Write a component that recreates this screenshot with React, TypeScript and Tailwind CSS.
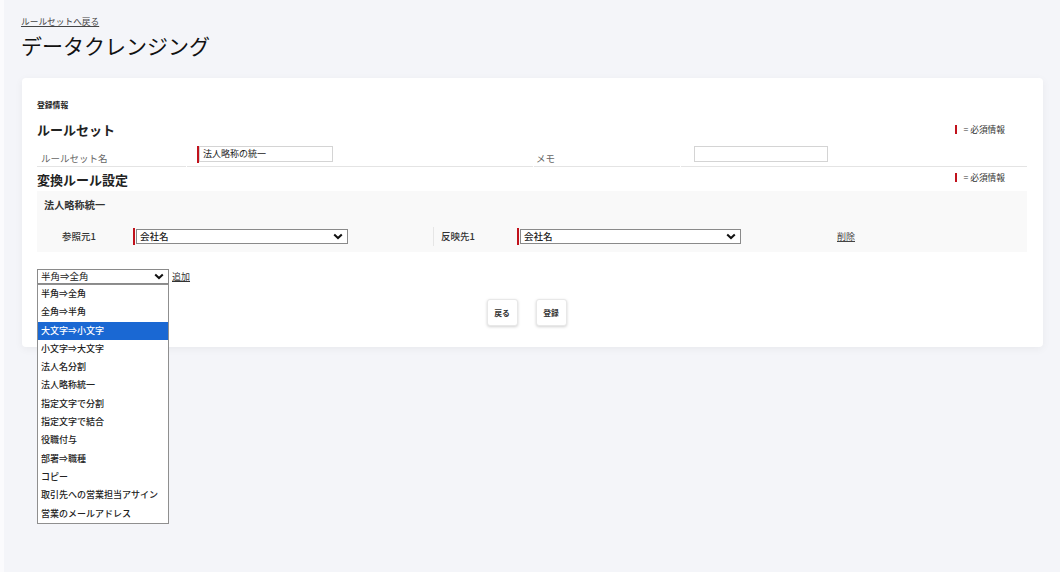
import React from 'react';

const options = [
  '半角⇒全角',
  '全角⇒半角',
  '大文字⇒小文字',
  '小文字⇒大文字',
  '法人名分割',
  '法人略称統一',
  '指定文字で分割',
  '指定文字で結合',
  '役職付与',
  '部署⇒職種',
  'コピー',
  '取引先への営業担当アサイン',
  '営業のメールアドレス',
];

function Chevron() {
  return (
    <svg width="10" height="7" viewBox="0 0 10 7" className="shrink-0">
      <path d="M1.2 1.4 L5 5 L8.8 1.4" fill="none" stroke="#111" strokeWidth="2" />
    </svg>
  );
}

function RequiredBar() {
  return <span className="block h-[17px] w-[2px] shrink-0 bg-[#c1121c]" />;
}

function FakeSelect({ value, width }: { value: string; width: string }) {
  return (
    <div
      className={`flex h-[15px] items-center justify-between border border-[#8a8a8a] bg-white pl-[3px] pr-[4px] text-[9.5px] text-[#222] ${width}`}
    >
      <span className="leading-none">{value}</span>
      <Chevron />
    </div>
  );
}

function Legend() {
  return (
    <div className="mr-[15px] flex items-center gap-[6px] bg-white px-[7px] text-[8.7px] text-[#333]">
      <span className="block h-[9px] w-[2px] bg-[#c1121c]" />
      <span>= 必須情報</span>
    </div>
  );
}

function App() {
  return (
    <div
      className="flex min-h-[572px] bg-[#f4f5f9] text-[#222]"
      style={{ fontFamily: '"Noto Sans CJK JP", "Noto Sans", sans-serif' }}
    >
      <div className="w-[4px] shrink-0 bg-[#fbfbfd]" />
      <div className="flex-1 pl-[17px] pt-[15px]">
        <a className="block text-[8.7px] leading-[14px] text-[#444] underline">ルールセットへ戻る</a>
        <h1 className="mt-[1px] text-[21px] leading-[30px] text-[#111]">データクレンジング</h1>

        <div className="mt-[18px] ml-[1px] w-[1021px] rounded-[4px] bg-white pl-[15px] pr-[16px] pt-[21px] pb-[21px] shadow-[0_2px_8px_rgba(0,0,0,0.05)]">
          <p className="text-[7.8px] font-bold leading-[12px] text-[#222]">登録情報</p>

          <div className="mt-[10px] flex items-center justify-between">
            <h2 className="text-[13px] font-bold leading-[18px] text-[#222]">ルールセット</h2>
            <Legend />
          </div>

          <div className="mt-[6px] flex gap-[1px] text-[9.5px] text-[#666]">
            <div className="flex h-[22px] w-[149px] items-end border-b border-[#e4e4e4] pb-[1px] pl-[4px]">ルールセット名</div>
            <div className="flex h-[22px] w-[346px] items-start border-b border-[#e4e4e4] pl-[10px] pt-[1px]">
              <RequiredBar />
              <div className="h-[16px] w-[134px] border border-[#d4d4d4] pl-[3px] text-[9px] leading-[14px] text-[#222]">
                法人略称の統一
              </div>
            </div>
            <div className="flex h-[22px] w-[146px] items-end border-b border-[#e4e4e4] pb-[1px] pl-[2px]">メモ</div>
            <div className="flex h-[22px] flex-1 items-start border-b border-[#e4e4e4] pl-[13px] pt-[1px]">
              <div className="h-[16px] w-[134px] border border-[#d4d4d4]" />
            </div>
          </div>

          <div className="-mt-[1px] flex items-center justify-between">
            <h2 className="mt-[5px] text-[13px] font-bold leading-[18px] text-[#222]">変換ルール設定</h2>
            <Legend />
          </div>

          <div className="mt-[2px] h-[61px] bg-[#f9f9f9] pl-[7px] pt-[6px]">
            <p className="text-[10.2px] font-bold leading-[16px] text-[#333]">法人略称統一</p>
            <div className="mt-[14px] flex items-center text-[9.5px] font-medium text-[#333]">
              <span className="w-[89px] pl-[18px]">参照元1</span>
              <RequiredBar />
              <FakeSelect value="会社名" width="ml-[1px] w-[212px]" />
              <span className="ml-[85px] h-[19px] w-px bg-[#e6e6e6]" />
              <span className="w-[83px] pl-[7px]">反映先1</span>
              <RequiredBar />
              <FakeSelect value="会社名" width="ml-[1px] w-[221px]" />
              <a className="ml-[96px] text-[9px] font-normal text-[#444] underline">削除</a>
            </div>
          </div>

          <div className="relative mt-[17px] flex items-center gap-[3px]">
            <FakeSelect value="半角⇒全角" width="w-[132px]" />
            <a className="text-[9px] text-[#333] underline">追加</a>
            <ul className="absolute left-0 top-[15px] z-10 w-[132px] border border-[#8f8f8f] bg-white">
              {options.map((o) => (
                <li
                  key={o}
                  className={`h-[18.3px] pl-[3px] text-[9px] font-medium leading-[18px] ${
                    o === '大文字⇒小文字' ? 'bg-[#1a68d3] text-white' : 'text-[#222]'
                  }`}
                >
                  {o}
                </li>
              ))}
            </ul>
          </div>

          <div className="mt-[15px] flex justify-center gap-[18px] pr-[11px]">
            <button className="h-[27px] w-[31px] rounded-[3px] border border-[#e8e8e8] bg-white text-[7.8px] font-bold text-[#333] shadow-[0_1px_3px_rgba(0,0,0,0.18)]">
              戻る
            </button>
            <button className="h-[27px] w-[31px] rounded-[3px] border border-[#e8e8e8] bg-white text-[7.8px] font-bold text-[#333] shadow-[0_1px_3px_rgba(0,0,0,0.18)]">
              登録
            </button>
          </div>
        </div>
      </div>
    </div>
  );
}

export default App;
